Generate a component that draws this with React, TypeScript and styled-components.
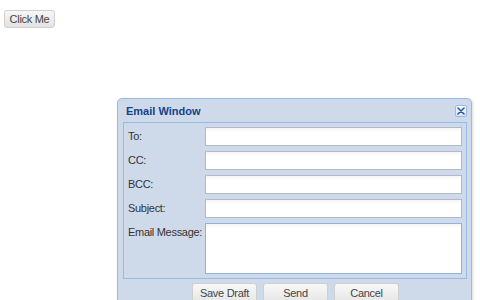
import React from 'react';
import styled, {createGlobalStyle} from "styled-components";

const GlobalStyle = createGlobalStyle`
  html, body {
    margin: 0;
    padding: 0;
    background: #ffffff;
    font-family: "Liberation Sans", Arial, sans-serif;
  }
`

type FieldPropsType = {
    label: string
    multiline?: boolean
}

const Field = (props: FieldPropsType) => {
    return (
        <Row>
            <Label>{props.label}</Label>
            {props.multiline ? <MessageArea autoFocus/> : <TextInput type="text"/>}
        </Row>
    );
};

export default function App() {
    return (
        <Page>
            <GlobalStyle/>
            <ClickButton>Click Me</ClickButton>
            <Window>
                <Header>
                    <Title>Email Window</Title>
                    <CloseButton aria-label="close">
                        <svg width="8" height="8" viewBox="0 0 8 8">
                            <path d="M1 1 L7 7 M7 1 L1 7" stroke="#3a5a9a" strokeWidth="1.6" strokeLinecap="round"/>
                        </svg>
                    </CloseButton>
                </Header>
                <Body>
                    <Field label="To:"/>
                    <Field label="CC:"/>
                    <Field label="BCC:"/>
                    <Field label="Subject:"/>
                    <Field label="Email Message:" multiline/>
                </Body>
                <ButtonBar>
                    <ActionButton>Save Draft</ActionButton>
                    <ActionButton>Send</ActionButton>
                    <ActionButton>Cancel</ActionButton>
                </ButtonBar>
            </Window>
        </Page>
    );
}

const Page = styled.div`
  position: relative;
  width: 480px;
  height: 300px;
  overflow: hidden;
`

const ClickButton = styled.button`
  display: block;
  margin: 10px 0 0 4px;
  width: 51px;
  height: 18px;
  padding: 0;
  font-family: "Liberation Sans", Arial, sans-serif;
  font-size: 11px;
  letter-spacing: -0.3px;
  color: #444;
  background: linear-gradient(#f7f7f7, #e2e2e2);
  border: 1px solid #cfcfcf;
  border-radius: 3px;
`

const Window = styled.div`
  position: absolute;
  left: 117px;
  top: 98px;
  width: 355px;
  height: 220px;
  box-sizing: border-box;
  padding: 0 4px 0 5px;
  background: #cedae9;
  border: 1px solid #99bbe8;
  border-radius: 5px 5px 0 0;
  box-shadow: 1px 1px 3px rgba(0, 0, 0, 0.15);
`

const Header = styled.div`
  display: flex;
  align-items: center;
  justify-content: space-between;
  height: 23px;
  padding: 0 0 0 3px;
`

const Title = styled.span`
  font-size: 11px;
  font-weight: bold;
  color: #15428b;
`

const CloseButton = styled.div`
  display: flex;
  align-items: center;
  justify-content: center;
  width: 10px;
  height: 10px;
  margin-top: 1px;
  background: linear-gradient(#f4f8fd, #dbe6f4);
  border: 1px solid #99bbe8;
  border-radius: 2px;
`

const Body = styled.div`
  display: flex;
  flex-direction: column;
  gap: 5px;
  padding: 4px;
  border: 1px solid #99bbe8;
`

const Row = styled.div`
  display: flex;
  align-items: flex-start;
`

const Label = styled.label`
  width: 77px;
  flex-shrink: 0;
  line-height: 19px;
  font-size: 11px;
  letter-spacing: -0.3px;
  color: #333;
`

const TextInput = styled.input`
  flex: 1;
  height: 19px;
  box-sizing: border-box;
  margin: 0;
  padding: 1px 3px;
  font-family: "Liberation Sans", Arial, sans-serif;
  font-size: 11px;
  background: linear-gradient(#f3f3f3, #ffffff 4px);
  border: 1px solid #b5b8c8;
  outline: none;
`

const MessageArea = styled.textarea`
  flex: 1;
  height: 51px;
  box-sizing: border-box;
  margin: 0;
  padding: 1px 2px;
  resize: none;
  font-family: "Liberation Sans", Arial, sans-serif;
  font-size: 11px;
  background: linear-gradient(#f3f3f3, #ffffff 4px);
  border: 1px solid #8fb4dc;
  outline: none;
`

const ButtonBar = styled.div`
  display: flex;
  justify-content: center;
  gap: 6px;
  padding-top: 4px;
  padding-left: 1px;
`

const ActionButton = styled.button`
  width: 65px;
  height: 22px;
  padding: 0 0 3px;
  font-family: "Liberation Sans", Arial, sans-serif;
  font-size: 11px;
  letter-spacing: -0.3px;
  color: #444;
  background: linear-gradient(#f8f8f8, #e4e4e4);
  border: 1px solid #cfcfcf;
  border-radius: 3px;
`
